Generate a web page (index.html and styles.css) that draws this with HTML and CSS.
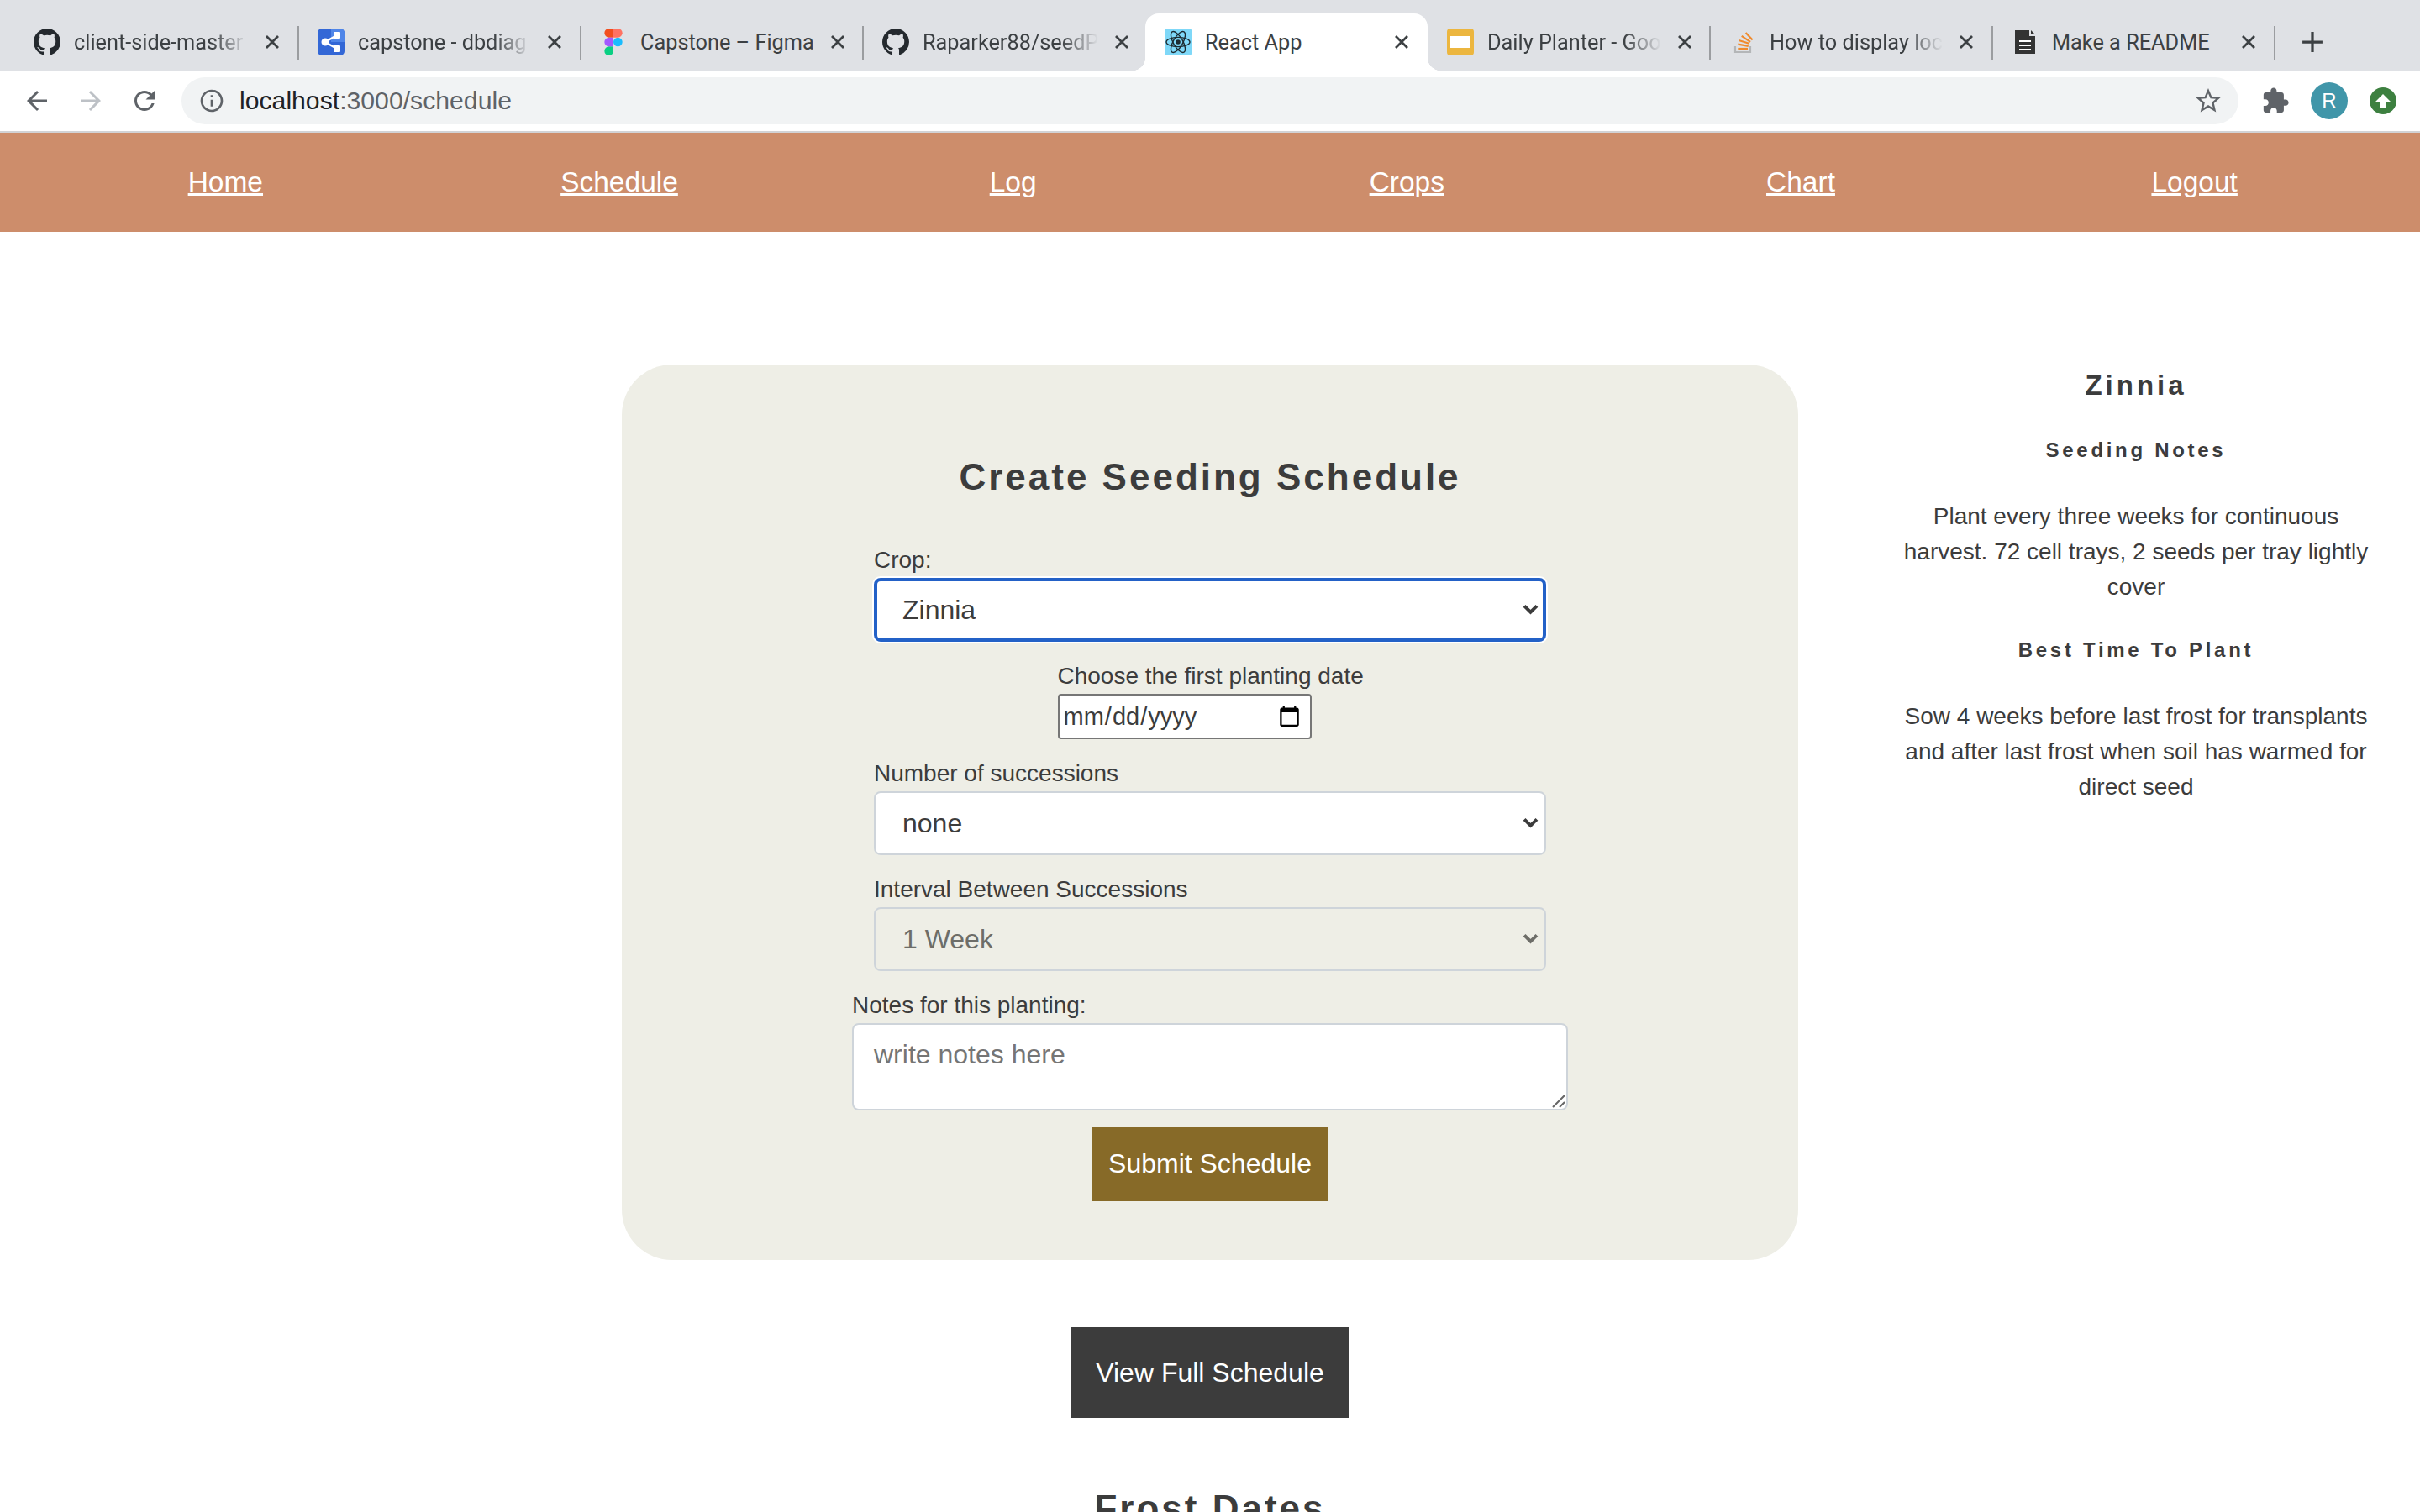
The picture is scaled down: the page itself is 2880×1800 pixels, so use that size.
FILE: index.html
```html
<!DOCTYPE html>
<html lang="en">
<head>
    <meta charset="UTF-8">
    <title>React App</title>
    <link rel="stylesheet" href="styles.css">
</head>
<body>
    <svg class="defs" width="0" height="0">
        <symbol id="github" viewBox="0 0 16 16"><path d="M8 0C3.58 0 0 3.58 0 8c0 3.54 2.29 6.53 5.47 7.59.4.07.55-.17.55-.38 0-.19-.01-.82-.01-1.49-2.01.37-2.53-.49-2.69-.94-.09-.23-.48-.94-.82-1.13-.28-.15-.68-.52-.01-.53.63-.01 1.08.58 1.23.82.72 1.21 1.87.87 2.33.66.07-.52.28-.87.51-1.07-1.78-.2-3.64-.89-3.64-3.95 0-.87.31-1.59.82-2.15-.08-.2-.36-1.02.08-2.12 0 0 .67-.21 2.2.82.64-.18 1.32-.27 2-.27.68 0 1.36.09 2 .27 1.53-1.04 2.2-.82 2.2-.82.44 1.1.16 1.92.08 2.12.51.56.82 1.27.82 2.15 0 3.07-1.87 3.75-3.65 3.95.29.25.54.73.54 1.48 0 1.07-.01 1.93-.01 2.2 0 .21.15.46.55.38A8.013 8.013 0 0016 8c0-4.42-3.58-8-8-8z" fill="#24292e"/></symbol>
        <symbol id="close" viewBox="0 0 16 16"><path d="M1 1l14 14M15 1L1 15" stroke="#3c4043" stroke-width="2.8" fill="none"/></symbol>
        <symbol id="chevron" viewBox="0 0 20 14"><path d="M2 2.5l8 8 8-8" stroke="currentColor" stroke-width="4.2" fill="none"/></symbol>
    </svg>

    <!-- browser chrome -->
    <div class="tabstrip">
        <div class="tab">
            <svg class="favicon"><use href="#github"/></svg>
            <span class="tab-title tab-fade">client-side-master</span>
            <svg class="tab-close"><use href="#close"/></svg>
        </div>
        <div class="tab">
            <svg class="favicon" viewBox="0 0 32 32">
                <rect width="32" height="32" rx="5" fill="#3367d6"/>
                <path d="M16 0h11a5 5 0 0 1 5 5v11H16z" fill="#4f85e8"/>
                <path d="M23 8L9 16l14 8" stroke="#fff" stroke-width="2.5" fill="none"/>
                <rect x="19" y="4" width="8" height="8" rx="1" fill="#fff"/>
                <rect x="19" y="20" width="8" height="8" rx="1" fill="#fff"/>
                <circle cx="9" cy="16" r="4.5" fill="#fff"/>
            </svg>
            <span class="tab-title tab-fade">capstone - dbdiag</span>
            <svg class="tab-close"><use href="#close"/></svg>
        </div>
        <div class="tab">
            <svg class="favicon" viewBox="-9 0 56 57">
                <path d="M19 28.5a9.5 9.5 0 1 1 19 0 9.5 9.5 0 0 1-19 0z" fill="#1abcfe"/>
                <path d="M0 47.5A9.5 9.5 0 0 1 9.5 38H19v9.5a9.5 9.5 0 1 1-19 0z" fill="#0acf83"/>
                <path d="M19 0v19h9.5a9.5 9.5 0 1 0 0-19H19z" fill="#ff7262"/>
                <path d="M0 9.5A9.5 9.5 0 0 0 9.5 19H19V0H9.5A9.5 9.5 0 0 0 0 9.5z" fill="#f24e1e"/>
                <path d="M0 28.5A9.5 9.5 0 0 0 9.5 38H19V19H9.5A9.5 9.5 0 0 0 0 28.5z" fill="#a259ff"/>
            </svg>
            <span class="tab-title">Capstone – Figma</span>
            <svg class="tab-close"><use href="#close"/></svg>
        </div>
        <div class="tab tab-before-active">
            <svg class="favicon"><use href="#github"/></svg>
            <span class="tab-title tab-fade">Raparker88/seedP</span>
            <svg class="tab-close"><use href="#close"/></svg>
        </div>
        <div class="tab tab-active">
            <svg class="favicon" viewBox="0 0 32 32">
                <rect width="32" height="32" rx="2" fill="#7fd8f8"/>
                <g fill="none" stroke="#1c2a30" stroke-width="1.4">
                    <ellipse cx="16" cy="16" rx="14" ry="5.6"/>
                    <ellipse cx="16" cy="16" rx="14" ry="5.6" transform="rotate(60 16 16)"/>
                    <ellipse cx="16" cy="16" rx="14" ry="5.6" transform="rotate(120 16 16)"/>
                </g>
                <circle cx="16" cy="16" r="2.8" fill="#1c2a30"/>
            </svg>
            <span class="tab-title">React App</span>
            <svg class="tab-close"><use href="#close"/></svg>
        </div>
        <div class="tab">
            <svg class="favicon" viewBox="0 0 32 32">
                <rect width="32" height="32" rx="4" fill="#ecb63f"/>
                <rect x="4" y="9" width="24" height="14" fill="#fff"/>
            </svg>
            <span class="tab-title tab-fade">Daily Planter - Goo</span>
            <svg class="tab-close"><use href="#close"/></svg>
        </div>
        <div class="tab">
            <svg class="favicon" viewBox="0 0 32 32">
                <path d="M7 21v7h18v-7" fill="none" stroke="#b4b6b8" stroke-width="2.2"/>
                <g stroke="#f08a2c" stroke-width="2.2">
                    <path d="M10.3 24h11.7"/>
                    <path d="M10.3 18.6l12.4 2.2"/>
                    <path d="M11.3 14l12.2 3.8"/>
                    <path d="M14.7 8.8l10.4 7"/>
                    <path d="M19.6 5l8 8.4"/>
                </g>
            </svg>
            <span class="tab-title tab-fade">How to display loc</span>
            <svg class="tab-close"><use href="#close"/></svg>
        </div>
        <div class="tab">
            <svg class="favicon" viewBox="0 0 32 32">
                <path d="M4 2h17v7h7v21H4z" fill="#333"/>
                <path d="M23 2l5 5h-5z" fill="#333"/>
                <path d="M9 15h14M9 20h14M9 25h14" stroke="#fff" stroke-width="2.2"/>
            </svg>
            <span class="tab-title">Make a README</span>
            <svg class="tab-close"><use href="#close"/></svg>
        </div>
        <svg class="new-tab" viewBox="0 0 24 24"><path d="M12 1v22M1 12h22" stroke="#3c4043" stroke-width="3" fill="none"/></svg>
    </div>

    <div class="toolbar">
        <svg class="tool-icon" viewBox="0 0 24 24"><path d="M20 11H7.83l5.59-5.59L12 4l-8 8 8 8 1.41-1.41L7.83 13H20v-2z" fill="#5f6368"/></svg>
        <svg class="tool-icon" viewBox="0 0 24 24"><path d="M4 11h12.17l-5.59-5.59L12 4l8 8-8 8-1.41-1.41L16.17 13H4v-2z" fill="#bdc1c6"/></svg>
        <svg class="tool-icon" viewBox="0 0 24 24"><path d="M17.65 6.35C16.2 4.9 14.21 4 12 4c-4.42 0-7.99 3.58-7.99 8s3.57 8 7.99 8c3.73 0 6.84-2.55 7.73-6h-2.08c-.82 2.33-3.04 4-5.65 4-3.31 0-6-2.69-6-6s2.69-6 6-6c1.66 0 3.14.69 4.22 1.78L13 11h7V4l-2.35 2.35z" fill="#5f6368"/></svg>
        <div class="omnibox">
            <svg class="info-icon" viewBox="0 0 24 24"><path d="M11 7h2v2h-2zm0 4h2v6h-2zm1-9C6.48 2 2 6.48 2 12s4.48 10 10 10 10-4.48 10-10S17.52 2 12 2zm0 18c-4.41 0-8-3.59-8-8s3.59-8 8-8 8 3.59 8 8-3.59 8-8 8z" fill="#5f6368"/></svg>
            <span class="url"><span class="url-host">localhost</span>:3000/schedule</span>
            <svg class="star-icon" viewBox="0 0 24 24"><path d="M22 9.24l-7.19-.62L12 2 9.19 8.63 2 9.24l5.46 4.73L5.82 21 12 17.27 18.18 21l-1.63-7.03L22 9.24zM12 15.4l-3.76 2.27 1-4.28-3.32-2.88 4.38-.38L12 6.1l1.71 4.04 4.38.38-3.32 2.88 1 4.28L12 15.4z" fill="#5f6368"/></svg>
        </div>
        <svg class="puzzle-icon" viewBox="0 0 24 24"><path d="M20.5 11H19V7c0-1.1-.9-2-2-2h-4V3.5C13 2.12 11.88 1 10.5 1S8 2.12 8 3.5V5H4c-1.1 0-1.99.9-1.99 2v3.8H3.5c1.49 0 2.7 1.21 2.7 2.7s-1.21 2.7-2.7 2.7H2V20c0 1.1.9 2 2 2h3.8v-1.5c0-1.49 1.21-2.7 2.7-2.7 1.49 0 2.7 1.21 2.7 2.7V22H17c1.1 0 2-.9 2-2v-4h1.5c1.38 0 2.5-1.12 2.5-2.5S21.88 11 20.5 11z" fill="#5f6368"/></svg>
        <div class="avatar">R</div>
        <div class="update-badge">
            <svg viewBox="0 0 32 32"><path d="M16 8l9 9h-5v7h-8v-7H7z" fill="#fff"/></svg>
        </div>
    </div>

    <!-- app -->
    <nav class="navbar">
        <a href="#">Home</a>
        <a href="#">Schedule</a>
        <a href="#">Log</a>
        <a href="#">Crops</a>
        <a href="#">Chart</a>
        <a href="#">Logout</a>
    </nav>

    <main class="page">
        <div class="page-left"></div>

        <div class="page-center">
            <form class="schedule-card">
                <h2 class="card-title">Create Seeding Schedule</h2>

                <div class="field">
                    <label for="crop">Crop:</label>
                    <div class="select-wrap">
                        <select id="crop" class="select select-focused">
                            <option>Zinnia</option>
                        </select>
                        <svg class="select-arrow"><use href="#chevron"/></svg>
                    </div>
                </div>

                <div class="field field-date">
                    <label for="date">Choose the first planting date</label>
                    <input type="date" id="date" class="date-input">
                </div>

                <div class="field">
                    <label for="successions">Number of successions</label>
                    <div class="select-wrap">
                        <select id="successions" class="select">
                            <option>none</option>
                        </select>
                        <svg class="select-arrow"><use href="#chevron"/></svg>
                    </div>
                </div>

                <div class="field">
                    <label for="interval">Interval Between Successions</label>
                    <div class="select-wrap">
                        <select id="interval" class="select" disabled>
                            <option>1 Week</option>
                        </select>
                        <svg class="select-arrow select-arrow-off"><use href="#chevron"/></svg>
                    </div>
                </div>

                <div class="field field-notes">
                    <label for="notes">Notes for this planting:</label>
                    <div class="notes-wrap">
                        <textarea id="notes" class="notes" placeholder="write notes here"></textarea>
                        <svg class="notes-grip" viewBox="0 0 16 16"><path d="M1 15L15 1M9 15l6-6" stroke="#666" stroke-width="2" fill="none"/></svg>
                    </div>
                </div>

                <button type="submit" class="btn-submit">Submit Schedule</button>
            </form>

            <button type="button" class="btn-view">View Full Schedule</button>

            <h2 class="frost-title">Frost Dates</h2>
        </div>

        <aside class="crop-info">
            <h3>Zinnia</h3>
            <h4>Seeding Notes</h4>
            <p>Plant every three weeks for continuous harvest. 72 cell trays, 2 seeds per tray lightly cover</p>
            <h4 class="best-time">Best Time To Plant</h4>
            <p>Sow 4 weeks before last frost for transplants and after last frost when soil has warmed for direct seed</p>
        </aside>
    </main>
</body>
</html>
```
FILE: styles.css
```css
html, body { margin: 0; height: 1800px; overflow: hidden; background: #fff; }
body { font-family: "Liberation Sans", Arial, sans-serif; color: #3c3c3c; }
.defs { display: block; height: 0; }

/* tab strip */
.tabstrip { display: flex; align-items: flex-end; height: 84px; padding-left: 19px; background: #dfe1e5; font-family: Roboto, sans-serif; }
.tab { position: relative; display: flex; align-items: center; box-sizing: border-box; width: 336px; height: 68px; padding: 0 23px 0 21px; }
.tab + .tab { padding-left: 23px; }
.tab::after { content: ""; position: absolute; right: -1px; top: 15px; width: 2px; height: 40px; background: #9b9da0; }
.tab-before-active::after { display: none; }
.tab-active { background: #fff; border-radius: 16px 16px 0 0; }
.tab-active::before, .tab-active::after { content: ""; position: absolute; top: auto; bottom: 0; width: 16px; height: 16px; }
.tab-active::before { left: -16px; background: radial-gradient(circle at 0 0, transparent 16px, #fff 16.5px); }
.tab-active::after { right: -16px; background: radial-gradient(circle at 100% 0, transparent 16px, #fff 16.5px); }
.favicon { flex: none; width: 32px; height: 32px; margin-right: 16px; }
.tab-title { flex: 1; white-space: nowrap; font-size: 25.3px; color: #3c4043; margin-right: 20px; }
.tab-fade { -webkit-mask-image: linear-gradient(to right, #000 calc(100% - 44px), transparent 100%); mask-image: linear-gradient(to right, #000 calc(100% - 44px), transparent 100%); }
.tab-close { flex: none; width: 16px; height: 16px; }
.new-tab { width: 26px; height: 26px; margin: 0 0 21px 32px; }

/* toolbar */
.toolbar { display: flex; align-items: center; box-sizing: border-box; height: 74px; border-bottom: 2px solid #d2d3d6; background: #fff; }
.tool-icon { width: 36px; height: 36px; margin-left: 28px; flex: none; }
.tool-icon:first-child { margin-left: 26px; }
.omnibox { display: flex; align-items: center; flex: 1; height: 56px; margin-left: 26px; padding: 0 18px 0 20px; border-radius: 28px; background: #f1f3f4; }
.info-icon { width: 32px; height: 32px; margin-right: 17px; }
.url { flex: 1; font-size: 30.2px; color: #5f6368; }
.url-host { color: #202124; }
.star-icon { width: 36px; height: 36px; }
.puzzle-icon { width: 34px; height: 34px; margin-left: 27px; flex: none; }
.avatar { display: flex; align-items: center; justify-content: center; width: 44px; height: 44px; margin-left: 25px; border-radius: 50%; background: #4196a9; color: #fff; font-size: 24px; flex: none; }
.update-badge { width: 32px; height: 32px; margin: 0 28px 0 26px; border-radius: 50%; background: #3d8040; flex: none; }
.update-badge svg { display: block; width: 32px; height: 32px; }

/* navbar */
.navbar { display: grid; grid-template-columns: repeat(6, 1fr); align-items: center; height: 118px; padding: 0 34px; background: #cd8d6b; text-align: center; }
.navbar a { color: #fff; font-size: 33.5px; }

/* page */
.page { display: grid; grid-template-columns: 740px 1400px 740px; padding-top: 158px; }
.page-center { display: flex; flex-direction: column; align-items: center; }

.schedule-card { display: flex; flex-direction: column; align-items: center; box-sizing: border-box; width: 1400px; height: 1066px; padding-top: 109px; border-radius: 60px; background: #eeeee6; }
.card-title, .frost-title { margin: 0; font-size: 44px; line-height: 50px; letter-spacing: 3px; color: #3c3c3c; }
.card-title { margin-bottom: 57px; }

.field { display: flex; flex-direction: column; width: 800px; margin-bottom: 24px; }
.field label { padding-bottom: 5px; font-size: 28px; line-height: 33px; white-space: nowrap; }
.field-date { width: 363px; }
.field-notes { width: 852px; margin-bottom: 20px; }

.select-wrap, .notes-wrap { position: relative; }
.select { display: block; box-sizing: border-box; width: 800px; height: 76px; padding: 0 32px; appearance: none; -webkit-appearance: none; border: 2px solid #ced4da; border-radius: 8px; background: #fff; color: #3c3c3c; font-family: "Liberation Sans", Arial, sans-serif; font-size: 32px; }
.select:disabled { background: #eeeee6; color: #6d6d68; opacity: 1; }
.select-focused { border: 4px solid #2361c7; padding-left: 30px; box-shadow: 0 0 0 2px #fff; }
.select-arrow { position: absolute; right: 9px; top: 31px; width: 19px; height: 13px; color: #3c3c3c; pointer-events: none; }
.select-arrow-off { color: #6d6d68; }

.date-input { box-sizing: border-box; width: 302px; height: 54px; padding: 2px 8px 2px 4px; border: 2px solid #767676; border-radius: 4px; background: #fff; color: #3c3c3c; font-family: "Liberation Sans", Arial, sans-serif; font-size: 29px; }

.notes { display: block; box-sizing: border-box; width: 852px; height: 104px; padding: 17px 24px; resize: none; border: 2px solid #ced4da; border-radius: 8px; background: #fff; font-family: "Liberation Sans", Arial, sans-serif; font-size: 32px; }
.notes::placeholder { color: #757575; }
.notes-grip { position: absolute; right: 3px; bottom: 3px; width: 16px; height: 16px; pointer-events: none; }

.btn-submit { width: 280px; height: 88px; padding-bottom: 3px; border: none; background: #876a28; color: #fff; font-family: "Liberation Sans", Arial, sans-serif; font-size: 32px; }
.btn-view { width: 332px; height: 108px; margin-top: 80px; border: none; background: #3c3c3c; color: #fff; font-family: "Liberation Sans", Arial, sans-serif; font-size: 32px; }
.frost-title { margin-top: 83px; }

/* crop details */
.crop-info { width: 564px; margin-left: 120px; text-align: center; }
.crop-info h3 { margin: 6px 0 43px; font-size: 33px; line-height: 38px; letter-spacing: 4px; }
.crop-info h4 { margin: 0 0 43px; font-size: 24px; line-height: 30px; letter-spacing: 3.7px; }
.crop-info p { margin: 0; font-size: 28px; line-height: 42px; }
.crop-info .best-time { margin: 39px 0 43px; }
```
